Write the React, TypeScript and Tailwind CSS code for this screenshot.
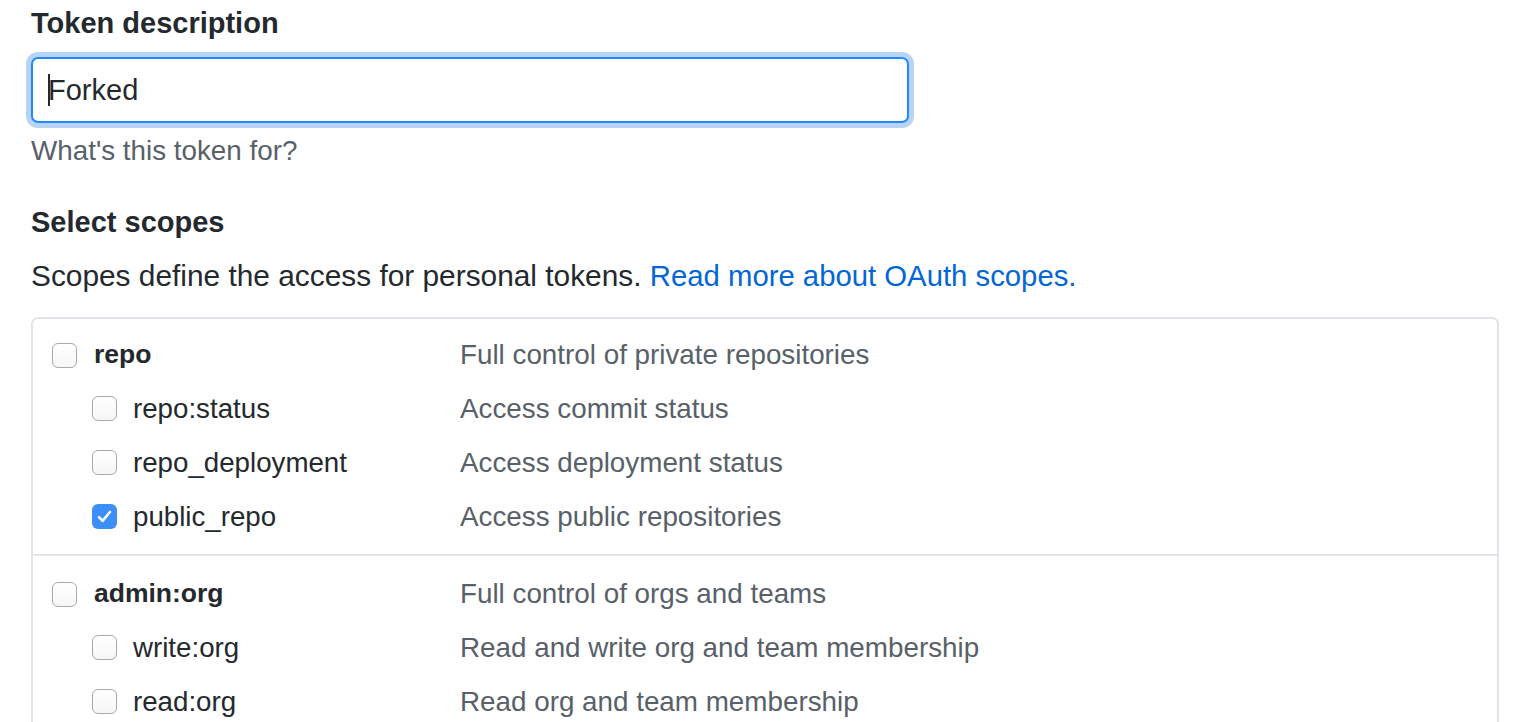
import React from "react";

type Scope = {
  name: string;
  description: string;
  checked?: boolean;
  sub?: boolean;
};

const groups: Scope[][] = [
  [
    { name: "repo", description: "Full control of private repositories" },
    { name: "repo:status", description: "Access commit status", sub: true },
    { name: "repo_deployment", description: "Access deployment status", sub: true },
    { name: "public_repo", description: "Access public repositories", sub: true, checked: true },
  ],
  [
    { name: "admin:org", description: "Full control of orgs and teams" },
    { name: "write:org", description: "Read and write org and team membership", sub: true },
    { name: "read:org", description: "Read org and team membership", sub: true },
  ],
];

const Checkbox = ({ checked }: { checked?: boolean }) =>
  checked ? (
    <span className="flex h-[25px] w-[25px] shrink-0 items-center justify-center rounded-[6px] bg-[#3b8ff7]">
      <svg width="15" height="13" viewBox="0 0 15 13" fill="none">
        <path d="M2 7.2 L5.6 10.8 L13 2" stroke="white" strokeWidth="2.6" strokeLinecap="round" strokeLinejoin="round" />
      </svg>
    </span>
  ) : (
    <span className="block h-[25px] w-[25px] shrink-0 rounded-[6px] border-[1.5px] border-[#a9a9a9] bg-gradient-to-b from-white to-[#f6f6f6]" />
  );

const ScopeRow = ({ scope }: { scope: Scope }) => (
  <div className="flex h-[54px] items-center">
    <div className={`flex w-[408px] items-center ${scope.sub ? "pl-[40px]" : ""}`}>
      <Checkbox checked={scope.checked} />
      <span
        className={
          scope.sub
            ? "ml-[16px] text-[27.7px] text-[#24292e]"
            : "ml-[17px] text-[26.5px] font-bold text-[#24292e]"
        }
      >
        {scope.name}
      </span>
    </div>
    <span className="text-[27.8px] text-[#586069]">{scope.description}</span>
  </div>
);

export default function App() {
  return (
    <div className="min-h-screen bg-white pl-[31px] pr-[15px] font-['Liberation_Sans',Arial,sans-serif] text-[#24292e]">
      <h2 className="pt-[6px] text-[29px] font-bold leading-[34px]">Token description</h2>

      <div className="mt-[17px] flex h-[66px] w-[878px] items-center rounded-[7px] border-2 border-[#2188ff] bg-white pl-[15px] shadow-[0_0_0_5px_#b7d4f6]">
        <span className="-mr-[2px] inline-block h-[32px] w-[2px] bg-[#24292e]" />
        <span className="text-[29px] leading-none">Forked</span>
      </div>

      <p className="mt-[11px] text-[27.8px] leading-[34px] text-[#586069]">What's this token for?</p>

      <h3 className="mt-[37px] text-[29px] font-bold leading-[34px]">Select scopes</h3>

      <p className="mt-[19px] text-[29.85px] leading-[36px]">
        Scopes define the access for personal tokens.{" "}
        <a className="text-[29.3px] text-[#0366d6]" href="#">
          Read more about OAuth scopes.
        </a>
      </p>

      <div className="mt-[23px] rounded-[7px] border-2 border-[#e1e4e8]">
        {groups.map((group, i) => (
          <div
            key={i}
            className={`pl-[19px] pb-[10px] ${i > 0 ? "border-t-2 border-[#e1e4e8] pt-[11px]" : "pt-[9px]"}`}
          >
            {group.map((scope) => (
              <ScopeRow key={scope.name} scope={scope} />
            ))}
          </div>
        ))}
      </div>
    </div>
  );
}
